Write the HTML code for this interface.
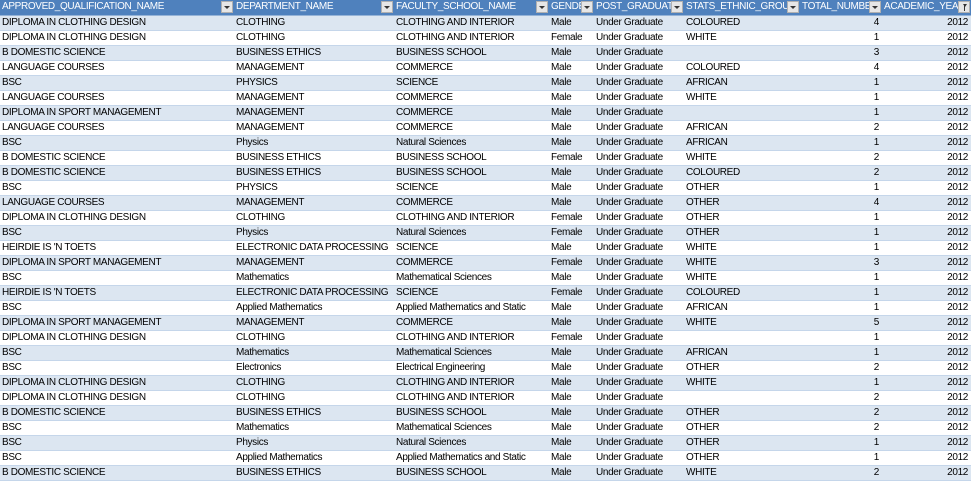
<!DOCTYPE html>
<html><head><meta charset="utf-8"><style>
*{margin:0;padding:0;box-sizing:border-box}
html,body{width:971px;height:481px;overflow:hidden;background:#fff}
table{border-collapse:collapse;table-layout:fixed;width:971px;font-family:"Liberation Sans",sans-serif;font-size:10px;color:#000;letter-spacing:-0.35px}
td,th{height:15px;padding:0 2px;white-space:nowrap;overflow:hidden;border-bottom:1px solid #c5d6ea;line-height:14px;text-align:left;font-weight:normal}
th{background:#4f81bd;color:#fff;position:relative;padding-right:15px;border-bottom:1px solid #95b3d7}
th .b{position:absolute;right:1px;top:1px;width:12px;height:12px;background:#e6e6e6;border:1px solid #b0b0b0}
th .b:after{content:"";position:absolute;left:2px;top:4px;border-left:3px solid transparent;border-right:3px solid transparent;border-top:3px solid #333}
th .f:after{content:"";position:absolute;left:4px;top:2px;width:0;height:0;border-left:2px solid transparent;border-right:2px solid transparent;border-top:3px solid #333}
th .f:before{content:"";position:absolute;left:5px;top:3px;width:1px;height:6px;background:#333}
tr:nth-child(even) td{background:#dce6f1}
td.r{text-align:right;padding-right:3px}
</style></head><body>
<table>
<colgroup><col style="width:234px"><col style="width:160px"><col style="width:155px"><col style="width:45px"><col style="width:90px"><col style="width:116px"><col style="width:82px"><col style="width:89px"></colgroup>
<tr><th>APPROVED_QUALIFICATION_NAME<span class="b"></span></th><th>DEPARTMENT_NAME<span class="b"></span></th><th>FACULTY_SCHOOL_NAME<span class="b"></span></th><th>GENDER<span class="b"></span></th><th>POST_GRADUATE<span class="b"></span></th><th>STATS_ETHNIC_GROUP<span class="b"></span></th><th>TOTAL_NUMBER<span class="b"></span></th><th>ACADEMIC_YEAR<span class="b f"></span></th></tr>
<tr><td>DIPLOMA IN CLOTHING DESIGN</td><td>CLOTHING</td><td>CLOTHING AND INTERIOR</td><td>Male</td><td>Under Graduate</td><td>COLOURED</td><td class="r">4</td><td class="r">2012</td></tr>
<tr><td>DIPLOMA IN CLOTHING DESIGN</td><td>CLOTHING</td><td>CLOTHING AND INTERIOR</td><td>Female</td><td>Under Graduate</td><td>WHITE</td><td class="r">1</td><td class="r">2012</td></tr>
<tr><td>B DOMESTIC SCIENCE</td><td>BUSINESS ETHICS</td><td>BUSINESS SCHOOL</td><td>Male</td><td>Under Graduate</td><td></td><td class="r">3</td><td class="r">2012</td></tr>
<tr><td>LANGUAGE COURSES</td><td>MANAGEMENT</td><td>COMMERCE</td><td>Male</td><td>Under Graduate</td><td>COLOURED</td><td class="r">4</td><td class="r">2012</td></tr>
<tr><td>BSC</td><td>PHYSICS</td><td>SCIENCE</td><td>Male</td><td>Under Graduate</td><td>AFRICAN</td><td class="r">1</td><td class="r">2012</td></tr>
<tr><td>LANGUAGE COURSES</td><td>MANAGEMENT</td><td>COMMERCE</td><td>Male</td><td>Under Graduate</td><td>WHITE</td><td class="r">1</td><td class="r">2012</td></tr>
<tr><td>DIPLOMA IN SPORT MANAGEMENT</td><td>MANAGEMENT</td><td>COMMERCE</td><td>Male</td><td>Under Graduate</td><td></td><td class="r">1</td><td class="r">2012</td></tr>
<tr><td>LANGUAGE COURSES</td><td>MANAGEMENT</td><td>COMMERCE</td><td>Male</td><td>Under Graduate</td><td>AFRICAN</td><td class="r">2</td><td class="r">2012</td></tr>
<tr><td>BSC</td><td>Physics</td><td>Natural Sciences</td><td>Male</td><td>Under Graduate</td><td>AFRICAN</td><td class="r">1</td><td class="r">2012</td></tr>
<tr><td>B DOMESTIC SCIENCE</td><td>BUSINESS ETHICS</td><td>BUSINESS SCHOOL</td><td>Female</td><td>Under Graduate</td><td>WHITE</td><td class="r">2</td><td class="r">2012</td></tr>
<tr><td>B DOMESTIC SCIENCE</td><td>BUSINESS ETHICS</td><td>BUSINESS SCHOOL</td><td>Male</td><td>Under Graduate</td><td>COLOURED</td><td class="r">2</td><td class="r">2012</td></tr>
<tr><td>BSC</td><td>PHYSICS</td><td>SCIENCE</td><td>Male</td><td>Under Graduate</td><td>OTHER</td><td class="r">1</td><td class="r">2012</td></tr>
<tr><td>LANGUAGE COURSES</td><td>MANAGEMENT</td><td>COMMERCE</td><td>Male</td><td>Under Graduate</td><td>OTHER</td><td class="r">4</td><td class="r">2012</td></tr>
<tr><td>DIPLOMA IN CLOTHING DESIGN</td><td>CLOTHING</td><td>CLOTHING AND INTERIOR</td><td>Female</td><td>Under Graduate</td><td>OTHER</td><td class="r">1</td><td class="r">2012</td></tr>
<tr><td>BSC</td><td>Physics</td><td>Natural Sciences</td><td>Female</td><td>Under Graduate</td><td>OTHER</td><td class="r">1</td><td class="r">2012</td></tr>
<tr><td>HEIRDIE IS 'N TOETS</td><td>ELECTRONIC DATA PROCESSING</td><td>SCIENCE</td><td>Male</td><td>Under Graduate</td><td>WHITE</td><td class="r">1</td><td class="r">2012</td></tr>
<tr><td>DIPLOMA IN SPORT MANAGEMENT</td><td>MANAGEMENT</td><td>COMMERCE</td><td>Female</td><td>Under Graduate</td><td>WHITE</td><td class="r">3</td><td class="r">2012</td></tr>
<tr><td>BSC</td><td>Mathematics</td><td>Mathematical Sciences</td><td>Male</td><td>Under Graduate</td><td>WHITE</td><td class="r">1</td><td class="r">2012</td></tr>
<tr><td>HEIRDIE IS 'N TOETS</td><td>ELECTRONIC DATA PROCESSING</td><td>SCIENCE</td><td>Female</td><td>Under Graduate</td><td>COLOURED</td><td class="r">1</td><td class="r">2012</td></tr>
<tr><td>BSC</td><td>Applied Mathematics</td><td>Applied Mathematics and Static</td><td>Male</td><td>Under Graduate</td><td>AFRICAN</td><td class="r">1</td><td class="r">2012</td></tr>
<tr><td>DIPLOMA IN SPORT MANAGEMENT</td><td>MANAGEMENT</td><td>COMMERCE</td><td>Male</td><td>Under Graduate</td><td>WHITE</td><td class="r">5</td><td class="r">2012</td></tr>
<tr><td>DIPLOMA IN CLOTHING DESIGN</td><td>CLOTHING</td><td>CLOTHING AND INTERIOR</td><td>Female</td><td>Under Graduate</td><td></td><td class="r">1</td><td class="r">2012</td></tr>
<tr><td>BSC</td><td>Mathematics</td><td>Mathematical Sciences</td><td>Male</td><td>Under Graduate</td><td>AFRICAN</td><td class="r">1</td><td class="r">2012</td></tr>
<tr><td>BSC</td><td>Electronics</td><td>Electrical Engineering</td><td>Male</td><td>Under Graduate</td><td>OTHER</td><td class="r">2</td><td class="r">2012</td></tr>
<tr><td>DIPLOMA IN CLOTHING DESIGN</td><td>CLOTHING</td><td>CLOTHING AND INTERIOR</td><td>Male</td><td>Under Graduate</td><td>WHITE</td><td class="r">1</td><td class="r">2012</td></tr>
<tr><td>DIPLOMA IN CLOTHING DESIGN</td><td>CLOTHING</td><td>CLOTHING AND INTERIOR</td><td>Male</td><td>Under Graduate</td><td></td><td class="r">2</td><td class="r">2012</td></tr>
<tr><td>B DOMESTIC SCIENCE</td><td>BUSINESS ETHICS</td><td>BUSINESS SCHOOL</td><td>Male</td><td>Under Graduate</td><td>OTHER</td><td class="r">2</td><td class="r">2012</td></tr>
<tr><td>BSC</td><td>Mathematics</td><td>Mathematical Sciences</td><td>Male</td><td>Under Graduate</td><td>OTHER</td><td class="r">2</td><td class="r">2012</td></tr>
<tr><td>BSC</td><td>Physics</td><td>Natural Sciences</td><td>Male</td><td>Under Graduate</td><td>OTHER</td><td class="r">1</td><td class="r">2012</td></tr>
<tr><td>BSC</td><td>Applied Mathematics</td><td>Applied Mathematics and Static</td><td>Male</td><td>Under Graduate</td><td>OTHER</td><td class="r">1</td><td class="r">2012</td></tr>
<tr><td>B DOMESTIC SCIENCE</td><td>BUSINESS ETHICS</td><td>BUSINESS SCHOOL</td><td>Male</td><td>Under Graduate</td><td>WHITE</td><td class="r">2</td><td class="r">2012</td></tr>
</table>
</body></html>
